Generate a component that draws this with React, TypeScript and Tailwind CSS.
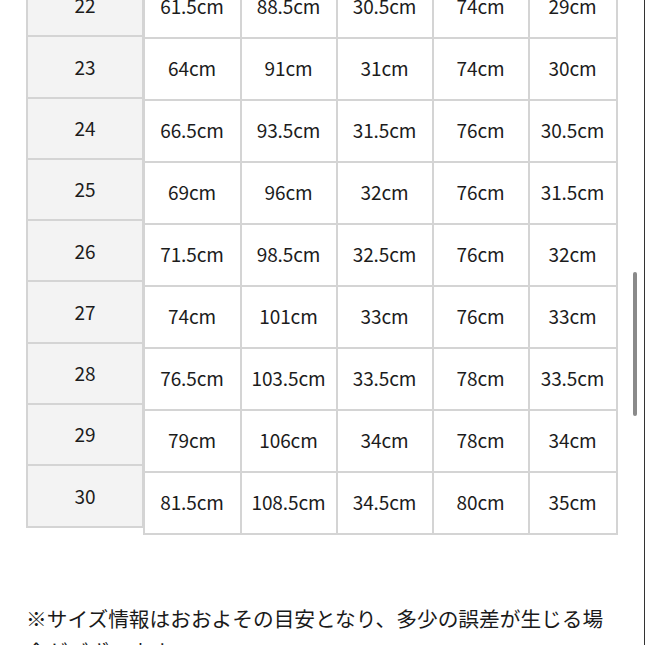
const sizes = ['22', '23', '24', '25', '26', '27', '28', '29', '30'];

const rows: string[][] = [
  ['61.5cm', '88.5cm', '30.5cm', '74cm', '29cm'],
  ['64cm', '91cm', '31cm', '74cm', '30cm'],
  ['66.5cm', '93.5cm', '31.5cm', '76cm', '30.5cm'],
  ['69cm', '96cm', '32cm', '76cm', '31.5cm'],
  ['71.5cm', '98.5cm', '32.5cm', '76cm', '32cm'],
  ['74cm', '101cm', '33cm', '76cm', '33cm'],
  ['76.5cm', '103.5cm', '33.5cm', '78cm', '33.5cm'],
  ['79cm', '106cm', '34cm', '78cm', '34cm'],
  ['81.5cm', '108.5cm', '34.5cm', '80cm', '35cm'],
];

const font = { fontFamily: '"Noto Sans CJK JP", "Noto Sans", sans-serif' };

export default function App() {
  return (
    <div
      className="relative h-[645px] w-[645px] overflow-hidden bg-white text-[#1c1c1c] border-r border-[#333]"
      style={font}
    >
      {/* size table */}
      <div className="flex items-start mt-[-26px] pl-[26px]">
        {/* size column */}
        <div className="grid w-[118px] grid-cols-1 gap-[2px] bg-[#d4d4d4] p-[2px]">
          {sizes.map(s => (
            <div
              key={s}
              className="flex h-[59.3px] items-center justify-center bg-[#f3f3f3] text-[19px]"
            >
              {s}
            </div>
          ))}
        </div>

        {/* measurements */}
        <div className="ml-[-1.5px] mt-[0.6px] grid grid-cols-[95px_94px_94px_94px_86px] gap-[2px] bg-[#d4d4d4] p-[2px]">
          {rows.map((r, i) =>
            r.map((v, j) => (
              <div
                key={`${i}-${j}`}
                className="flex h-[60px] items-center justify-center bg-white text-[19px] tracking-[-0.1px]"
              >
                {v}
              </div>
            )),
          )}
        </div>
      </div>

      {/* note */}
      <p className="mt-[67px] w-[616px] pl-[26px] text-[20.7px] leading-[33px] text-[#1a1a1a]">
        ※サイズ情報はおおよその目安となり、多少の誤差が生じる場合がございます。
      </p>

      {/* scrollbar thumb */}
      <div className="absolute left-[633px] top-[272px] h-[144px] w-[4px] rounded-full bg-[#8a8a8a]" />
    </div>
  );
}
